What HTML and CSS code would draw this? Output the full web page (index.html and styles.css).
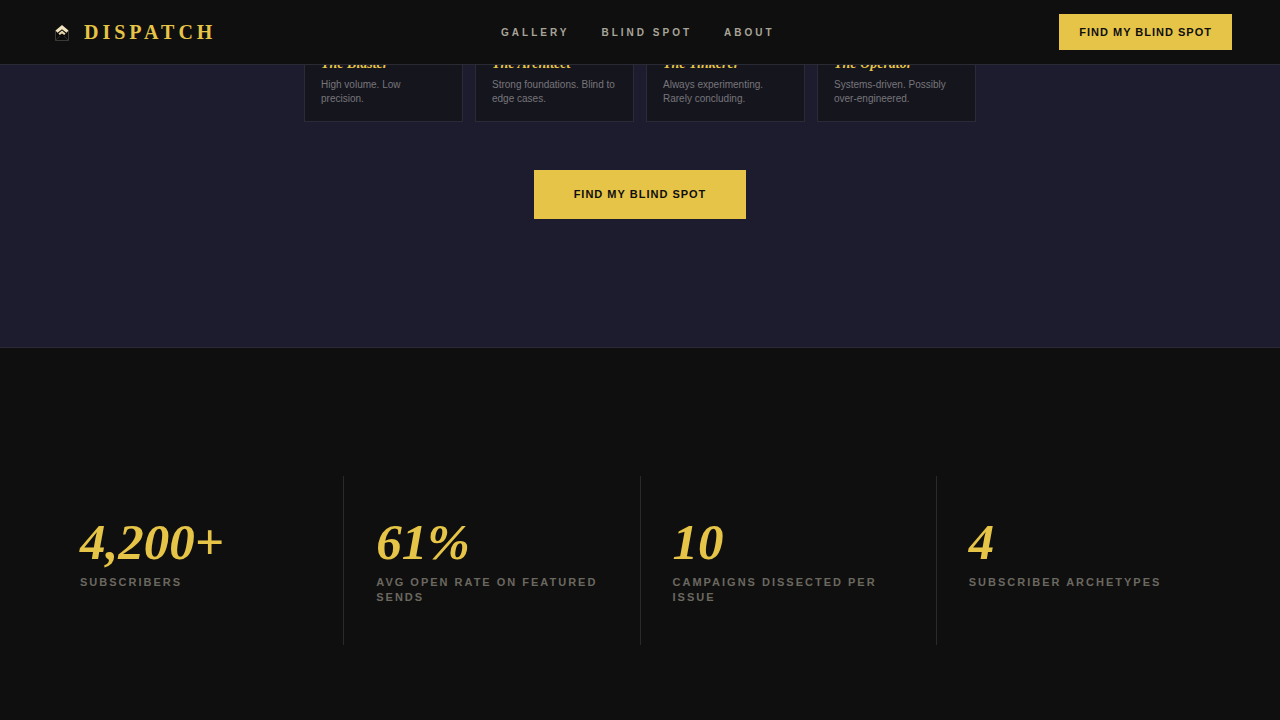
FILE: index.html
```html
<!DOCTYPE html>
<html lang="en">
<head>
    <meta charset="UTF-8">
    <meta name="viewport" content="width=device-width, initial-scale=1.0">
    <title>Dispatch</title>
    <link rel="stylesheet" href="styles.css">
</head>
<body>
    <header class="site-header">
        <a class="logo" href="#">
            <svg class="logo-icon" viewBox="0 0 28 28" aria-hidden="true">
                <path d="M7.5 12.5V22.5H20.5V12.5" fill="#0b0b0c" stroke="#4a4843" stroke-width="0.8"/>
                <path d="M7.5 22.5L12 18M20.5 22.5L16 18" fill="none" stroke="#37352f" stroke-width="0.8"/>
                <path d="M14 7L20.5 12.5L18.5 14.8L14 11.2L9.5 14.8L7.5 12.5Z" fill="#f1e4bd"/>
                <path d="M14 12.4L17.6 15.6L16.2 17L14 15.4L11.8 17L10.4 15.6Z" fill="#e3d3a6"/>
            </svg>
            <span>DISPATCH</span>
        </a>
        <nav class="site-nav">
            <a href="#gallery">GALLERY</a>
            <a href="#blind-spot">BLIND SPOT</a>
            <a href="#about">ABOUT</a>
        </nav>
        <button type="button" class="btn btn-small">FIND MY BLIND SPOT</button>
    </header>

    <main>
        <section class="archetypes" id="blind-spot">
            <div class="cards">
                <article class="card">
                    <h3>The Blaster</h3>
                    <p>High volume. Low precision.</p>
                </article>
                <article class="card">
                    <h3>The Architect</h3>
                    <p>Strong foundations. Blind to edge cases.</p>
                </article>
                <article class="card">
                    <h3>The Tinkerer</h3>
                    <p>Always experimenting. Rarely concluding.</p>
                </article>
                <article class="card">
                    <h3>The Operator</h3>
                    <p>Systems-driven. Possibly over-engineered.</p>
                </article>
            </div>
            <button type="button" class="btn btn-large">FIND MY BLIND SPOT</button>
        </section>

        <section class="stats" id="about">
            <div class="stats-grid">
                <div class="stat">
                    <div class="stat-number">4,200+</div>
                    <div class="stat-label">SUBSCRIBERS</div>
                </div>
                <div class="stat">
                    <div class="stat-number">61%</div>
                    <div class="stat-label">AVG OPEN RATE ON FEATURED SENDS</div>
                </div>
                <div class="stat">
                    <div class="stat-number">10</div>
                    <div class="stat-label">CAMPAIGNS DISSECTED PER ISSUE</div>
                </div>
                <div class="stat">
                    <div class="stat-number">4</div>
                    <div class="stat-label">SUBSCRIBER ARCHETYPES</div>
                </div>
            </div>
        </section>
    </main>
</body>
</html>
```
FILE: styles.css
```css
* {
    box-sizing: border-box;
    margin: 0;
    padding: 0;
}

html {
    scrollbar-width: none;
}

body {
    font-family: "Liberation Sans", Arial, sans-serif;
    background-color: #0f0f0f;
    color: #a8a498;
}

a {
    color: inherit;
    text-decoration: none;
}

/* header */
.site-header {
    position: fixed;
    top: 0;
    left: 0;
    right: 0;
    z-index: 10;
    display: flex;
    align-items: center;
    justify-content: space-between;
    padding: 14px 48px;
    background-color: #0f0f10;
    border-bottom: 1px solid #2a2a35;
}

.logo {
    display: flex;
    align-items: center;
    gap: 8px;
    font-family: "Liberation Serif", "Times New Roman", serif;
    font-size: 20px;
    font-weight: bold;
    letter-spacing: 4px;
    color: #e6c447;
}

.logo-icon {
    width: 28px;
    height: 28px;
}

.site-nav {
    display: flex;
    gap: 32px;
    font-size: 10px;
    font-weight: bold;
    letter-spacing: 3px;
    color: #a8a498;
}

.btn {
    border: none;
    background-color: #e6c447;
    color: #0f0f0f;
    font-family: inherit;
    font-size: 11px;
    font-weight: bold;
    letter-spacing: 1px;
    cursor: pointer;
}

.btn:hover {
    background-color: #f0d264;
}

.btn-small {
    padding: 12px 20px;
    line-height: 12px;
}

.btn-large {
    padding: 18px 40px;
    line-height: 13px;
}

/* archetypes */
.archetypes {
    display: flex;
    flex-direction: column;
    align-items: center;
    gap: 48px;
    padding: 40px 48px 128px;
    background-color: #1c1c2e;
    border-bottom: 1px solid #2a2a35;
}

.cards {
    display: grid;
    grid-template-columns: repeat(4, 1fr);
    gap: 12px;
    width: 100%;
    max-width: 672px;
}

.card {
    padding: 15px 16px;
    background-color: #15151e;
    border: 1px solid #2a2a38;
}

.card h3 {
    margin-bottom: 6px;
    font-family: "Liberation Serif", "Times New Roman", serif;
    font-size: 14px;
    font-style: italic;
    line-height: 16px;
    color: #e6c447;
}

.card p {
    font-size: 10px;
    line-height: 14px;
    color: #77757a;
}

/* stats */
.stats {
    padding: 128px 48px 72px;
}

.stats-grid {
    display: grid;
    grid-template-columns: repeat(4, 1fr);
    gap: 1px;
    background-color: #2a2a2a;
}

.stat {
    padding: 40px 32px;
    background-color: #0f0f0f;
}

.stat-number {
    margin-bottom: 6px;
    font-family: "Liberation Serif", "Times New Roman", serif;
    font-size: 51px;
    font-style: italic;
    font-weight: bold;
    line-height: 53px;
    color: #e6c447;
}

.stat-label {
    font-size: 11px;
    font-weight: bold;
    letter-spacing: 2px;
    line-height: 15px;
    color: #6b6860;
}
```
